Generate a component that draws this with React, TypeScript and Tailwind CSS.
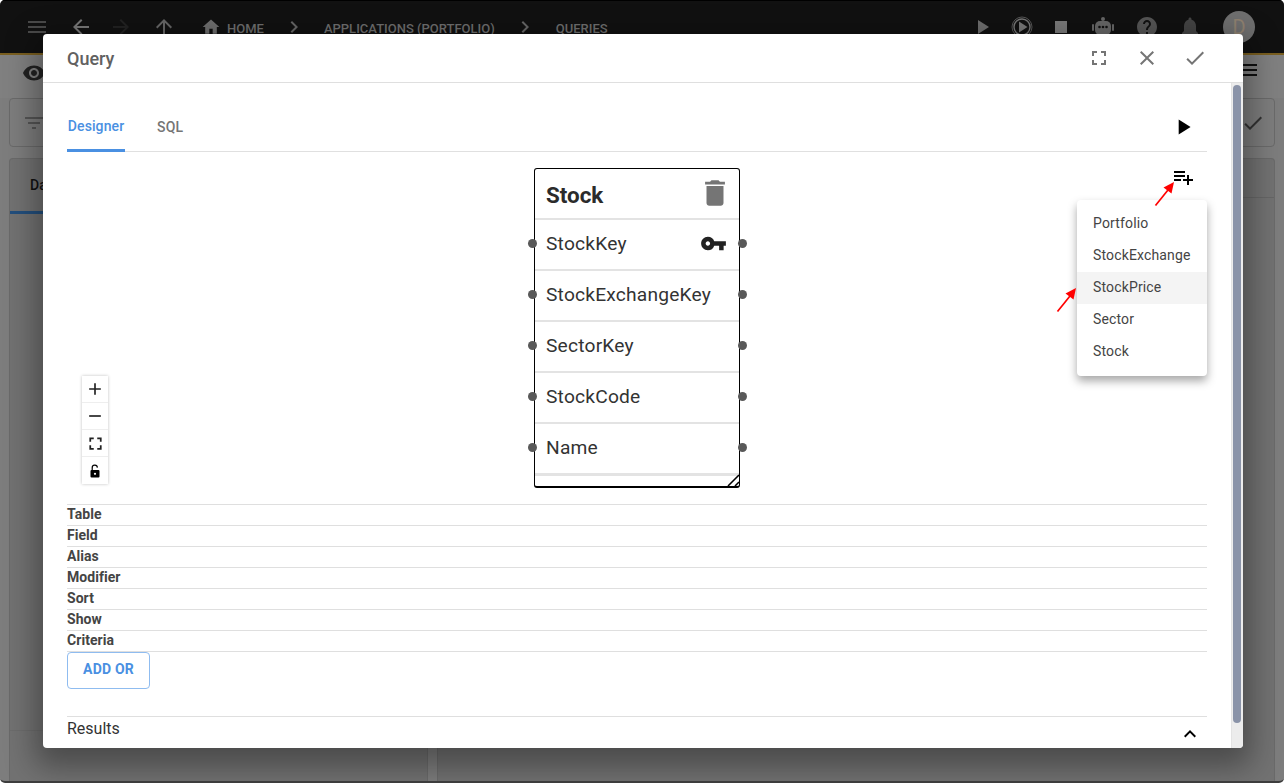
import React from "react";
import {
  MdMenu, MdArrowBack, MdArrowForward, MdArrowUpward, MdHome, MdChevronRight, MdPlayArrow, MdStop, MdHelp,
  MdNotifications, MdFullscreen, MdClose, MdCheck, MdPlaylistAdd, MdDelete, MdVpnKey, MdKeyboardArrowUp,
  MdAdd, MdRemove, MdRemoveRedEye, MdFilterList,
} from "react-icons/md";

const fields = ["StockKey", "StockExchangeKey", "SectorKey", "StockCode", "Name"];
const gridRows = ["Table", "Field", "Alias", "Modifier", "Sort", "Show", "Criteria"];
const tables = ["Portfolio", "StockExchange", "StockPrice", "Sector", "Stock"];

function Arrow({ x, y }: { x: number; y: number }) {
  return (
    <svg className="absolute" style={{ left: x, top: y }} width="22" height="26" viewBox="0 0 22 26">
      <line x1="1.5" y1="24.5" x2="14" y2="9" stroke="#ff0000" strokeWidth="1.7" />
      <polygon points="20,1 17.5,12.5 9.5,6.5" fill="#ff0000" />
    </svg>
  );
}

function FieldRow({ name, first }: { name: string; first: boolean }) {
  return (
    <div className="relative h-[51px] border-b-2 border-[#e3e3e3] flex items-center pl-[11px] text-[19.2px] text-[#333] tracking-[0.2px]">
      <span className="pb-[1px]">{name}</span>
      {first && <MdVpnKey className="absolute left-[165px] top-[10px] text-[#222]" size={27} />}
      <span className="absolute -left-[7px] top-[18.5px] w-[9px] h-[9px] rounded-full bg-[#595959]" />
      <span className="absolute -right-[8px] top-[18.5px] w-[9px] h-[9px] rounded-full bg-[#595959]" />
    </div>
  );
}

export default function App() {
  return (
    <div className="w-[1284px] h-[783px] bg-white">
      <div className="relative w-full h-full overflow-hidden rounded-[5px] bg-[#7d7d7d] font-['Roboto',sans-serif] border-b-2 border-[#3d3d3d]">
        {/* Dimmed application behind the dialog */}
        <div className="flex flex-col h-full">
          <div className="h-[53px] bg-[#111111] flex items-center pl-[25px] pr-[29px] text-[#6e6e6e] shrink-0 border-t border-[#000]">
            <MdMenu size={24} className="mr-[20px] text-[#4a4a4a]" />
            <MdArrowBack size={24} className="mr-[16px] text-[#777]" />
            <MdArrowForward size={24} className="mr-[19px] text-[#222]" />
            <MdArrowUpward size={24} className="mr-[25px] text-[#666]" />
            <MdHome size={20} className="mr-[6px] text-[#6e6e6e]" />
            <span className="text-[13px] font-medium mt-[4px]">HOME</span>
            <MdChevronRight size={24} className="ml-[18px] mr-[18px] text-[#666]" />
            <span className="text-[13px] font-medium mt-[4px]">APPLICATIONS (PORTFOLIO)</span>
            <MdChevronRight size={24} className="ml-[18px] mr-[19px] text-[#666]" />
            <span className="text-[13px] font-medium mt-[4px]">QUERIES</span>
            <div className="ml-auto flex items-center text-[#6e6e6e]">
              <MdPlayArrow size={24} className="mr-[16px]" />
              <svg width="24" height="24" viewBox="0 0 24 24" className="mr-[15px]">
                <circle cx="12" cy="12" r="10" fill="none" stroke="#666" strokeWidth="0.8" />
                <circle cx="12" cy="12" r="8" fill="none" stroke="#777" strokeWidth="1.4" />
                <polygon points="9,6.5 9,17.5 17.5,12" fill="#777" />
              </svg>
              <MdStop size={24} className="mr-[19px] text-[#7a7a7a]" />
              <svg width="22" height="24" viewBox="0 0 22 24" className="mr-[21px]">
                <circle cx="11" cy="4" r="2" fill="#666" />
                <rect x="3" y="6" width="16" height="14" rx="5" fill="#666" />
                <rect x="0" y="9" width="2" height="7" rx="1" fill="#666" />
                <rect x="20" y="9" width="2" height="7" rx="1" fill="#666" />
                <circle cx="7.5" cy="12" r="1.3" fill="#111" />
                <circle cx="11" cy="12" r="1.3" fill="#111" />
                <circle cx="14.5" cy="12" r="1.3" fill="#111" />
              </svg>
              <MdHelp size={24} className="mr-[19px] text-[#555]" />
              <MdNotifications size={24} className="mr-[21px] text-[#444]" />
              <div className="w-[32px] h-[32px] rounded-full bg-[#6f6f6f] text-[#8f8170] text-[20px] flex items-center justify-center">D</div>
            </div>
          </div>
          <div className="h-[2px] bg-[#7a5f20] shrink-0" />
          <div className="h-[43px] flex items-start justify-between pl-[22px] pr-[24px] pt-[5px] shrink-0 bg-[#808080]">
            <MdRemoveRedEye size={24} className="text-[#222] mt-[1px]" />
            <MdMenu size={24} className="text-[#111] -mt-[2px]" />
          </div>
          <div className="ml-[9px] h-[49px] rounded-[4px] border border-[#6a6a6a] flex items-center justify-between pl-[12px] pr-[9px] shrink-0 bg-[#7d7d7d] w-[1266px]">
            <MdFilterList size={24} className="text-[#555]" />
            <MdCheck size={24} className="text-[#333]" />
          </div>
          <div className="flex flex-1 mt-[11px] ml-[9px] mr-[9px] gap-[9px]">
            <div className="w-[419px] rounded-t-[4px] border border-b-0 border-[#6a6a6a] bg-[#727272] flex flex-col">
              <div className="h-[55px] w-[44px] border-b-[3px] border-[#234f7d] flex items-center pl-[20px] text-[14px] font-medium text-[#111]">Da</div>
              <div className="mt-auto h-[51px] border-t border-[#6c6c6c]" />
            </div>
            <div className="flex-1 rounded-t-[4px] border border-b-0 border-[#6a6a6a] bg-[#727272]">
              <div className="h-[39px] border-b border-[#666]" />
            </div>
          </div>
        </div>

        {/* Dialog */}
        <div className="absolute left-[43px] top-[34px] w-[1200px] h-[714px] bg-white rounded-[4px] shadow-[0_11px_30px_8px_rgba(0,0,0,0.35)] flex flex-col overflow-hidden text-[#333]">
          <div className="h-[49px] border-b border-[#dfdfdf] flex items-center pl-[24px] pr-[36px] shrink-0">
            <span className="text-[18px] font-medium text-[#616161]">Query</span>
            <div className="ml-auto flex items-center gap-[24px] text-[#757575]">
              <MdFullscreen size={24} />
              <MdClose size={24} />
              <MdCheck size={24} />
            </div>
          </div>
          <div className="flex flex-1 min-h-0">
            <div className="flex-1 flex flex-col pl-[24px] pr-[24px] min-w-0 relative">
              {/* Tabs */}
              <div className="h-[69px] shrink-0 border-b border-[#e0e0e0] flex items-end">
                <div className="h-[48px] w-[58px] border-b-[3px] border-[#4a90e2] -mb-px flex items-center justify-center text-[14px] font-medium text-[#4a90e2] tracking-[0.1px]">Designer</div>
                <div className="h-[48px] ml-[32px] flex items-center text-[14px] font-medium text-[#757575] tracking-[0.15px]">SQL</div>
                <MdPlayArrow size={26} className="ml-auto mr-[11px] mb-[11px] text-black" />
              </div>

              {/* Designer canvas */}
              <div className="relative h-[352px] shrink-0">
                <div className="absolute left-[467px] top-[16px] w-[206px] h-[320px] border-[1.5px] border-b-2 border-black rounded-[3px] bg-white">
                  <div className="h-[51px] border-b-2 border-[#e3e3e3] flex items-center justify-between pl-[11px] pr-[7px]">
                    <span className="text-[22.4px] font-bold text-[#2b2b2b] pt-[5px]">Stock</span>
                    <MdDelete size={34} className="text-[#757575] mb-[1px]" />
                  </div>
                  {fields.map((f, i) => <FieldRow key={f} name={f} first={i === 0} />)}
                  <div className="h-[1px] bg-[#e3e3e3]" />
                  <svg className="absolute -right-[1px] -bottom-[1px]" width="13" height="13" viewBox="0 0 13 13">
                    <line x1="1" y1="12" x2="12" y2="1" stroke="#000" strokeWidth="1.6" />
                    <line x1="8" y1="12" x2="12" y2="8" stroke="#000" strokeWidth="1.6" />
                  </svg>
                </div>

                <div className="absolute left-[15px] top-[224px] w-[26px] bg-white shadow-[0_0_3px_rgba(0,0,0,0.25)] flex flex-col text-[#222]">
                  <div className="h-[27px] flex items-center justify-center border-b border-[#eee]"><MdAdd size={20} /></div>
                  <div className="h-[27px] flex items-center justify-center border-b border-[#eee]"><MdRemove size={20} /></div>
                  <div className="h-[27px] flex items-center justify-center border-b border-[#eee]"><MdFullscreen size={21} /></div>
                  <div className="h-[27px] flex items-center justify-center">
                    <svg width="12" height="14" viewBox="0 0 12 14">
                      <path d="M3.2 6 V4 a2.6 2.6 0 0 1 5.2 -0.4" fill="none" stroke="#000" strokeWidth="1.2" />
                      <rect x="1.5" y="6" width="9" height="7.5" rx="1" fill="#000" />
                      <circle cx="6" cy="9.8" r="1.1" fill="#fff" />
                    </svg>
                  </div>
                </div>

                <MdPlaylistAdd size={24} className="absolute right-[12px] top-[13px] text-black" />

                <div className="absolute right-0 top-[48px] w-[130px] h-[176px] bg-white rounded-[4px] shadow-[0_5px_10px_rgba(0,0,0,0.35)] py-[8px] text-[14px] text-[#444] tracking-[0.15px]">
                  {tables.map((t) => (
                    <div key={t} className={`h-[32px] flex items-center pl-[16px] pb-[2px] ${t === "StockPrice" ? "bg-[#f4f4f4]" : ""}`}>{t}</div>
                  ))}
                </div>

                <Arrow x={1087} y={29} />
                <Arrow x={989} y={135} />
              </div>

              {/* Query grid */}
              <div className="shrink-0 border-b border-[#dfdfdf]">
                {gridRows.map((r) => (
                  <div key={r} className="h-[21px] border-t border-[#dfdfdf] flex items-center pb-[2px] text-[14px] font-bold text-[#444] tracking-[0.05px]">{r}</div>
                ))}
              </div>
              <div className="shrink-0">
                <button className="h-[37px] w-[83px] rounded-[4px] border border-[#8fbcf0] pb-[2px] text-[14px] font-bold text-[#4a90e2] tracking-[0.2px]">ADD OR</button>
              </div>
              <div className="mt-[27px] border-t border-[#dfdfdf] flex items-start justify-between">
                <span className="text-[16px] text-[#333]">Results</span>
                <MdKeyboardArrowUp size={24} className="text-black mt-[5px] mr-[5px]" />
              </div>
            </div>
            {/* Scrollbar */}
            <div className="w-[12px] bg-[#ececec] border-l border-[#e3e3e3] shrink-0 pt-[2px] pl-[1px] pr-[2px]">
              <div className="h-[638px] rounded-[5px] bg-[#8a93a8]" />
            </div>
          </div>
        </div>
      </div>
    </div>
  );
}
